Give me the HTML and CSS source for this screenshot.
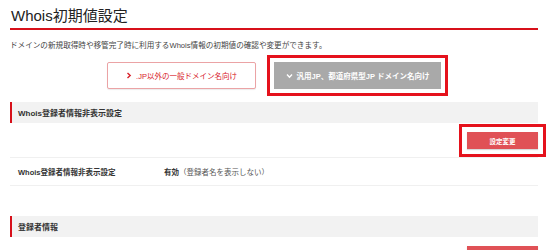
FILE: index.html
```html
<!DOCTYPE html>
<html lang="ja">
<head>
<meta charset="utf-8">
<link rel="stylesheet" href="styles.css">
</head>
<body>
<div class="page">
  <h1 class="title">Whois初期値設定</h1>
  <p class="desc">ドメインの新規取得時や移管完了時に利用するWhois情報の初期値の確認や変更ができます。</p>
  <div class="tabs">
    <a class="tab tab-out">
      <svg class="chev" width="6" height="7" viewBox="0 0 6 7"><path d="M1.5 1 L4.2 3.5 L1.5 6" fill="none" stroke="#d8202a" stroke-width="1.4"/></svg>
      .JP以外の一般ドメイン名向け
    </a>
    <a class="tab tab-on">
      <svg class="chev" width="7" height="6" viewBox="0 0 7 6"><path d="M1 1.5 L3.5 4.2 L6 1.5" fill="none" stroke="#ffffff" stroke-width="1.4"/></svg>
      汎用JP、都道府県型JP ドメイン名向け
    </a>
  </div>

  <section class="sect">
    <h2 class="sect-head">Whois登録者情報非表示設定</h2>
    <div class="actions"><a class="btn btn-hl">設定変更</a></div>
    <div class="row">
      <div class="row-label">Whois登録者情報非表示設定</div>
      <div class="row-value"><b>有効</b><span class="note">（登録者名を表示しない）</span></div>
    </div>
  </section>

  <section class="sect sect-2">
    <h2 class="sect-head">登録者情報</h2>
    <div class="actions"><a class="btn">設定変更</a></div>
  </section>
</div>
</body>
</html>
```
FILE: styles.css
```css
* { box-sizing: border-box; }
html, body { margin: 0; padding: 0; background: #fff; }
body {
  font-family: "Liberation Sans", "Noto Sans CJK JP", sans-serif;
  color: #333;
}
.page { padding: 0 12px 0 10px; width: 550px; overflow: hidden; height: 250px; }
.title {
  margin: 0;
  padding: 7px 0 3px 1px;
  font-size: 15px;
  font-weight: normal;
  line-height: 18px;
  color: #222;
  border-bottom: 2px solid #d7101a;
}
.desc {
  margin: 11px 0 0;
  font-size: 7.6px;
  line-height: 10px;
  color: #444;
}
.tabs {
  display: flex;
  justify-content: center;
  gap: 18px;
  margin-top: 11px;
}
.tab {
  display: flex;
  align-items: center;
  justify-content: center;
  gap: 4px;
  height: 27px;
  font-size: 7.5px;
}
.tab-out {
  width: 149px;
  border: 1px solid #eba3a5;
  border-radius: 2px;
  color: #d8202a;
  background: #fff;
  box-shadow: 0 1px 1px rgba(0,0,0,0.08);
}
.tab-on {
  width: 167px;
  background: #a9a9a9;
  color: #fff;
  font-weight: bold;
  outline: 3px solid #e5121c;
  outline-offset: 4px;
}
.sect { margin-top: 13px; }
.sect-2 { margin-top: 30px; }
.sect-head {
  margin: 0;
  height: 21px;
  display: flex;
  align-items: center;
  padding-left: 6px;
  background: #f2f2f2;
  border-left: 2px solid #d7101a;
  font-size: 8px;
  font-weight: bold;
  color: #333;
}
.actions {
  display: flex;
  justify-content: flex-end;
  padding: 9px 0 8px;
  border-bottom: 1px solid #f0f0f0;
}
.btn {
  width: 71px;
  height: 17px;
  display: flex;
  align-items: center;
  justify-content: center;
  background: #e05156;
  color: #fff;
  font-size: 6.5px;
  font-weight: bold;
  box-shadow: 0 1px 1px rgba(0,0,0,0.15);
}
.btn-hl {
  outline: 3px solid #e5121c;
  outline-offset: 5px;
}
.row {
  display: flex;
  align-items: center;
  height: 28px;
  border-bottom: 1px solid #f0f0f0;
  font-size: 7.5px;
}
.row-label {
  width: 154px;
  padding-left: 8px;
  font-weight: bold;
  color: #333;
}
.row-value b { color: #333; }
.note { color: #555; }
```
